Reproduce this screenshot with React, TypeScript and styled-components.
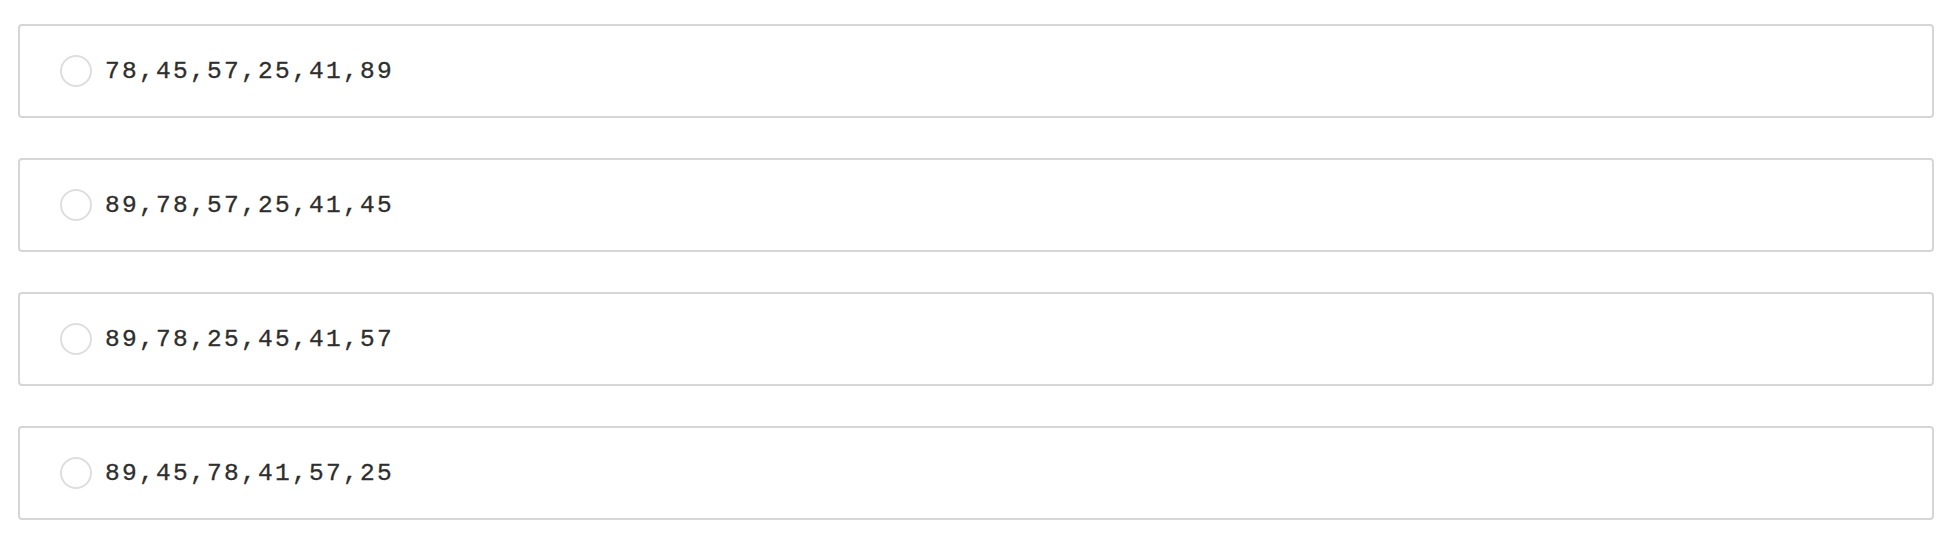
import React from "react";
import styled, { createGlobalStyle } from "styled-components";

const Global = createGlobalStyle`
  html, body { margin: 0; padding: 0; background: #ffffff; }
  body { font-family: "Liberation Sans", Arial, sans-serif; }
`;

const List = styled.div`
  display: flex;
  flex-direction: column;
  gap: 40px;
  padding: 24px 26px 0 18px;
`;

const Option = styled.label`
  display: flex;
  align-items: center;
  box-sizing: border-box;
  height: 94px;
  padding: 0 0 0 40px;
  border: 2px solid #d6d6d6;
  border-radius: 4px;
  background: #fff;
  cursor: pointer;
`;

const Radio = styled.span`
  box-sizing: border-box;
  width: 32px;
  height: 32px;
  border-radius: 50%;
  border: 2px solid #dedede;
  background: #fff;
  flex-shrink: 0;
`;

const Label = styled.span`
  margin-left: 13px;
  font-family: "Liberation Mono", "Courier New", monospace;
  font-size: 24.5px;
  letter-spacing: 2.3px;
  color: #2e2e2e;
  -webkit-text-stroke: 0.3px #2e2e2e;
`;

const options = [
  "78,45,57,25,41,89",
  "89,78,57,25,41,45",
  "89,78,25,45,41,57",
  "89,45,78,41,57,25",
];

export default function App() {
  return (
    <>
      <Global />
      <List>
        {options.map((o) => (
          <Option key={o}>
            <Radio />
            <Label>{o}</Label>
          </Option>
        ))}
      </List>
    </>
  );
}
